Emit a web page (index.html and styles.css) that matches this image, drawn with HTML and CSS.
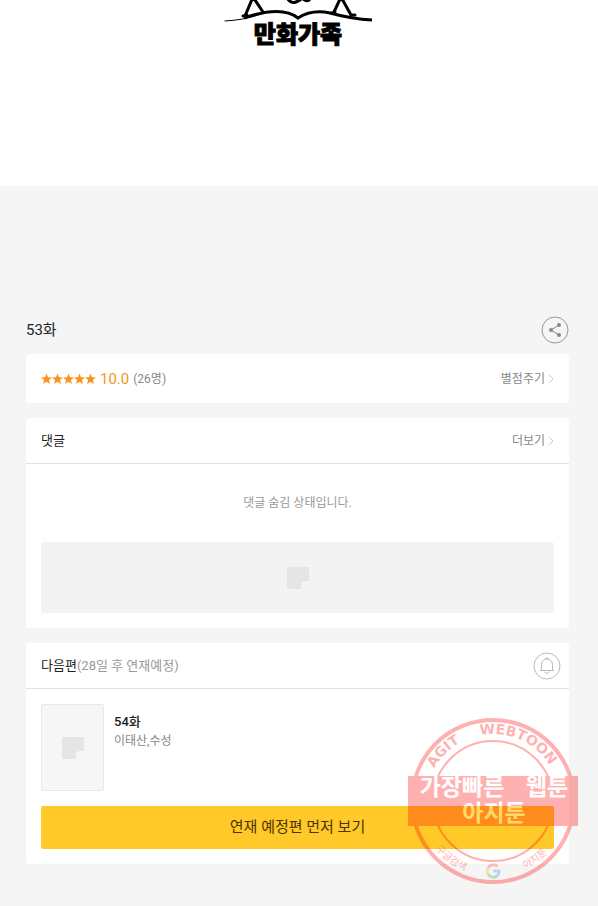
FILE: index.html
```html
<!DOCTYPE html>
<html lang="ko">
<head>
<meta charset="utf-8">
<meta name="viewport" content="width=device-width, initial-scale=1">
<title>53화</title>
<link rel="stylesheet" href="styles.css">
</head>
<body>
<header class="hero">
  <svg class="logo" viewBox="0 0 150 60" role="img" aria-label="만화가족">
    <g fill="none" stroke="#000" stroke-linecap="round">
      <path d="M21 16 29 -3 39 12" stroke-width="3"/>
      <path d="M19 16l4-1M110 12l7-15 10 18 4 0M108 13l3-1" stroke-width="3"/>
      <path d="M63 -2q4 6 9 4t6-4q5 5 8 1" stroke-width="3"/>
      <path d="M1 21Q20 20 34 15T60 12Q70 13 74 19" stroke-width="1"/>
      <path d="M20 18Q58 5 74 18Q88 9 106 13Q128 19 148 20" stroke-width="3" stroke-linecap="butt"/>
    </g>
    <text class="logo-text" x="74" y="43" text-anchor="middle">만화가족</text>
  </svg>
</header>
<main class="page">
  <div class="title-row">
    <h1 class="title">53화</h1>
    <button class="round-button" type="button" aria-label="공유">
      <svg viewBox="0 0 28 28"><circle cx="14" cy="14" r="13" fill="none" stroke="#999"/><path d="M18 9 10 14l8 5" fill="none" stroke="#888"/><g fill="#888"><circle cx="18" cy="9" r="2"/><circle cx="10" cy="14" r="2"/><circle cx="18" cy="19" r="2"/></g></svg>
    </button>
  </div>

  <section class="card rating">
    <div class="score">
      <svg class="stars" viewBox="0 0 55 12" role="img" aria-label="별점">
        <defs><path id="star" d="M5.500 .5 7 4.300 11 4.500 7.900 7 9 11 5.500 8.800 2 11 3.100 7 0 4.500 4 4.300z"/></defs>
        <g fill="#f7941e"><use href="#star"/><use href="#star" x="11"/><use href="#star" x="22"/><use href="#star" x="33"/><use href="#star" x="44"/></g>
      </svg>
      <strong class="score-value">10.0</strong>
      <span class="score-count">(26명)</span>
    </div>
    <a class="more" href="#rate">별점주기<svg viewBox="0 0 6 10"><path d="M1 1l4 4-4 4"/></svg></a>
  </section>

  <section class="card">
    <div class="card-head">
      <h2 class="card-title">댓글</h2>
      <a class="more" href="#comments">더보기<svg viewBox="0 0 6 10"><path d="M1 1l4 4-4 4"/></svg></a>
    </div>
    <div class="card-body">
      <p class="notice">댓글 숨김 상태입니다.</p>
      <div class="banner"><svg class="blank" viewBox="0 0 22 22"><path d="M0 0h22v14h-6l-2 3v5H0z"/></svg></div>
    </div>
  </section>

  <section class="card">
    <div class="card-head next-head">
      <h2 class="card-title">다음편<span class="due">(28일 후 연재예정)</span></h2>
      <button class="round-button" type="button" aria-label="알림">
        <svg viewBox="0 0 28 28" fill="none" stroke="#bbb"><circle cx="14" cy="14" r="13"/><path d="M7 18.500h14M8.500 18.500V12.500a5.500 5.500 0 0 1 11 0v6M13 7V6h2v1M11.500 19.500q2.500 4 5 0"/></svg>
      </button>
    </div>
    <div class="card-body">
      <div class="episode">
        <div class="thumb"><svg class="blank" viewBox="0 0 22 22"><path d="M0 0h22v14h-6l-2 3v5H0z"/></svg></div>
        <div>
          <h3 class="episode-title">54화</h3>
          <p class="authors">이태산,수성</p>
        </div>
      </div>
      <button class="preview" type="button">연재 예정편 먼저 보기</button>
    </div>
    <svg class="stamp" viewBox="0 0 170 170">
      <defs>
        <path id="arc-top" d="M18 85a67 67 0 0 1 134 0"/>
        <path id="arc-bottom" d="M10 85a75 75 0 0 0 150 0"/>
      </defs>
      <g fill="none" stroke="#f00">
        <circle cx="85" cy="85" r="81" stroke-width="4"/>
        <circle cx="85" cy="85" r="60" stroke-width="2"/>
      </g>
      <text class="stamp-latin"><textPath href="#arc-top" startOffset="25%">AGIT</textPath></text>
      <text class="stamp-latin"><textPath href="#arc-top" startOffset="63%">WEBTOON</textPath></text>
      <text class="stamp-small"><textPath href="#arc-bottom" startOffset="30%">구글검색</textPath></text>
      <text class="stamp-small"><textPath href="#arc-bottom" startOffset="70%">아지툰</textPath></text>
      <path d="M0 60h170v50H0z" fill="#f00"/>
      <g class="stamp-main">
        <text x="54" y="79">가장빠른</text>
        <text x="139" y="79">웹툰</text>
        <text x="86" y="105">아지툰</text>
      </g>
      <g fill="none" stroke-width="3">
        <path d="M89.500 150.500A6 6 0 0 0 80 152" stroke="#ea4335"/>
        <path d="M80 152a6 6 0 0 0 0 6" stroke="#fbbc05"/>
        <path d="M80 158a6 6 0 0 0 9 2" stroke="#34a853"/>
        <path d="M89 160a6 6 0 0 0 2-5h-6" stroke="#4285f4"/>
      </g>
    </svg>
  </section>
</main>
</body>
</html>
```
FILE: styles.css
```css
* { box-sizing: border-box; }
body {
  margin: 0;
  background: #f5f5f5;
  color: #222;
  font-family: Roboto, "Noto Sans CJK KR", sans-serif;
  font-size: 12px;
  line-height: 18px;
}
h1, h2, h3, p { margin: 0; }
button { border: 0; padding: 0; font: inherit; color: inherit; cursor: pointer; }
svg { display: block; }
a { color: inherit; text-decoration: none; }

.hero {
  display: flex;
  justify-content: center;
  background: #fff;
  padding-bottom: 126px;
}
.logo { width: 150px; height: 60px; }
.logo-text {
  font-family: "Noto Sans CJK KR", sans-serif;
  font-size: 24px;
  font-weight: 900;
  stroke: #000;
  stroke-width: 1px;
}

.page { padding: 130px 29px 42px 26px; }
.title-row {
  display: flex;
  align-items: center;
  justify-content: space-between;
  margin-bottom: 10px;
}
.title { font-size: 15px; font-weight: 400; }
.round-button { width: 28px; height: 28px; background: none; }

.card {
  position: relative;
  margin-bottom: 15px;
  background: #fff;
  border-radius: 3px;
}
.rating, .card-head {
  display: flex;
  align-items: center;
  justify-content: space-between;
  padding: 0 15px;
}
.rating { height: 49px; }
.card-head { height: 46px; border-bottom: 1px solid #e2e2e2; }
.card-head.next-head { padding-right: 8px; }
.card-title { font-size: 13px; font-weight: 400; }
.due { color: #999; }
.card-body { padding: 15px; }

.score { display: flex; align-items: center; gap: 4px; }
.stars { width: 55px; height: 12px; }
.score-value { font-size: 15px; font-weight: 400; color: #f7941e; }
.score-count { color: #888; }
.more { display: flex; align-items: center; gap: 3px; color: #888; }
.more svg { width: 6px; height: 10px; fill: none; stroke: #ccc; }

.notice { padding: 15px 0 30px; text-align: center; color: #999; }
.banner, .thumb { display: grid; place-items: center; background: #f3f3f3; }
.banner { height: 71px; border-radius: 3px; }
.blank { width: 22px; height: 22px; fill: #e5e5e5; }

.episode { display: flex; gap: 10px; margin-bottom: 15px; }
.thumb { width: 63px; height: 87px; border: 1px solid #e8e8e8; background: #f6f6f6; border-radius: 2px; }
.episode-title { padding-top: 8px; font-size: 13px; line-height: 20px; font-weight: 500; }
.authors { color: #888; }
.preview {
  display: block;
  width: 100%;
  height: 43px;
  padding-bottom: 2px;
  border-radius: 2px;
  background: #ffc929;
  color: #4d3300;
  font-size: 15px;
}

.stamp {
  position: absolute;
  right: -9px;
  bottom: -22px;
  width: 170px;
  height: 170px;
  opacity: .3;
  pointer-events: none;
}
.stamp text { text-anchor: middle; }
.stamp-latin {
  font-family: "DejaVu Sans", sans-serif;
  font-size: 14px;
  font-weight: 700;
  fill: #f00;
}
.stamp-small { font-size: 10px; fill: #f00; }
.stamp-main {
  font-size: 23px;
  font-weight: 700;
  fill: #fff;
}
```
